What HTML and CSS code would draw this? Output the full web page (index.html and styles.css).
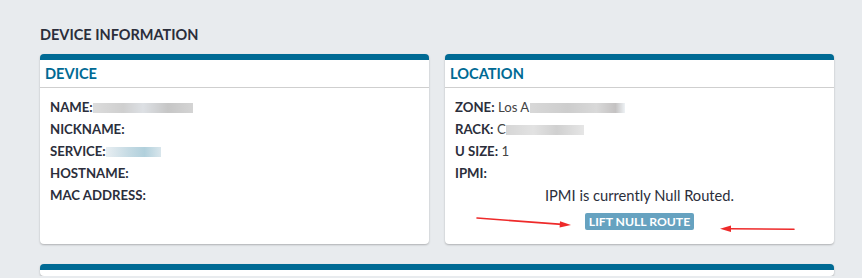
FILE: index.html
```html
<!DOCTYPE html>
<html lang="en">
  <head>
    <meta charset="UTF-8" />
    <title>Device Information</title>
    <link rel="stylesheet" href="styles.css">
  </head>
  <body>
    <div class="container">
      <h1>Device Information</h1>

      <div class="panels">
        <!-- Device -->
        <div class="panel">
          <h2>Device</h2>
          <div class="panel-body">
            <div class="row"><b>Name:</b><span class="redact redact-name"></span></div>
            <div class="row"><b>Nickname:</b></div>
            <div class="row"><b>Service:</b><span class="redact redact-service"></span></div>
            <div class="row"><b>Hostname:</b></div>
            <div class="row"><b>MAC Address:</b></div>
          </div>
        </div>

        <!-- Location -->
        <div class="panel">
          <h2>Location</h2>
          <div class="panel-body">
            <div class="row"><b>Zone:</b> Los A<span class="redact redact-zone"></span></div>
            <div class="row"><b>Rack:</b> C<span class="redact redact-rack"></span></div>
            <div class="row"><b>U Size:</b> 1</div>
            <div class="row"><b>IPMI:</b></div>
            <p class="notice">IPMI is currently Null Routed.</p>
            <div class="actions">
              <button type="button">Lift Null Route</button>
            </div>
          </div>
        </div>
      </div>

      <div class="panel panel-next"></div>
    </div>

    <!-- annotation arrows -->
    <svg class="arrows" width="862" height="278" viewBox="0 0 862 278">
      <g stroke="#ee2a2a" stroke-width="1.6" fill="#ee2a2a" stroke-linecap="round">
        <line x1="477" y1="218" x2="562" y2="224.4" />
        <polygon points="571,225.1 560,221.2 559.6,227.6" stroke="none" />
        <line x1="794" y1="229.3" x2="729" y2="228.8" />
        <polygon points="720,228.7 731,225.6 731,232" stroke="none" />
      </g>
    </svg>
  </body>
</html>
```

FILE: styles.css
```css
body {
  font-family: Lato, "Open Sans", sans-serif;
  background-color: #e8ebee;
  color: #333;
  margin: 0;
  padding: 0;
  overflow: hidden;
}

.container {
  padding: 25px 28px 0 40px;
}

h1 {
  font-size: 14.5px;
  font-weight: bold;
  text-transform: uppercase;
  color: #2b2e3b;
  line-height: 19px;
  margin: 0 0 10px;
}

.panels {
  display: grid;
  grid-template-columns: 1fr 1fr;
  gap: 16px;
}

.panel {
  background-color: #fff;
  border-top: 6px solid #006a94;
  border-radius: 4px;
  box-shadow: 0 1px 2px rgba(0, 0, 0, 0.25);
}

.panel h2 {
  font-size: 14.6px;
  font-weight: bold;
  text-transform: uppercase;
  color: #006a94;
  line-height: 27px;
  margin: 0;
  padding: 0 5px;
  border-bottom: 1px solid #cfcfcf;
}

.panel-body {
  padding: 8px 10px 14px;
}

.row {
  font-size: 13.2px;
  line-height: 22px;
  color: #444;
  white-space: nowrap;
}

.row b {
  color: #2b2e3b;
  text-transform: uppercase;
}

.redact {
  display: inline-block;
  height: 10px;
  vertical-align: -1px;
  filter: blur(0.6px);
}

.redact-name {
  width: 100px;
  background: linear-gradient(90deg, #dcdcdc 0%, #cfcfcf 30%, #dde0e4 50%, #c6c6c6 75%, #d4d4d4 100%);
}

.redact-service {
  width: 55px;
  background: linear-gradient(90deg, #e8eef2 0%, #c6dbe4 40%, #b1d0dc 70%, #d9e6ec 100%);
}

.redact-zone {
  width: 95px;
  margin-left: 1px;
  background: linear-gradient(90deg, #d8d8d8 0%, #cdcdcd 40%, #d9d9d9 70%, #c4c2c2 90%, #eef2f5 100%);
}

.redact-rack {
  width: 78px;
  background: linear-gradient(90deg, #d6d6d6 0%, #e2e2e2 35%, #d0d0d0 65%, #e6e6e6 100%);
}

.notice {
  margin: 0;
  font-size: 14.7px;
  line-height: 22px;
  color: #2b2e3b;
  text-align: center;
}

.actions {
  text-align: center;
  margin-top: 7px;
  line-height: 17px;
}

button {
  font-family: Lato, "Open Sans", sans-serif;
  font-size: 12.2px;
  font-weight: bold;
  text-transform: uppercase;
  color: #fff;
  background-color: #66a2c0;
  border: none;
  border-radius: 2px;
  height: 17px;
  line-height: 17px;
  padding: 0 4px;
  vertical-align: top;
  cursor: pointer;
}

.panel-next {
  margin-top: 20px;
  height: 6px;
}

.arrows {
  position: absolute;
  top: 0;
  left: 0;
  pointer-events: none;
}
```
